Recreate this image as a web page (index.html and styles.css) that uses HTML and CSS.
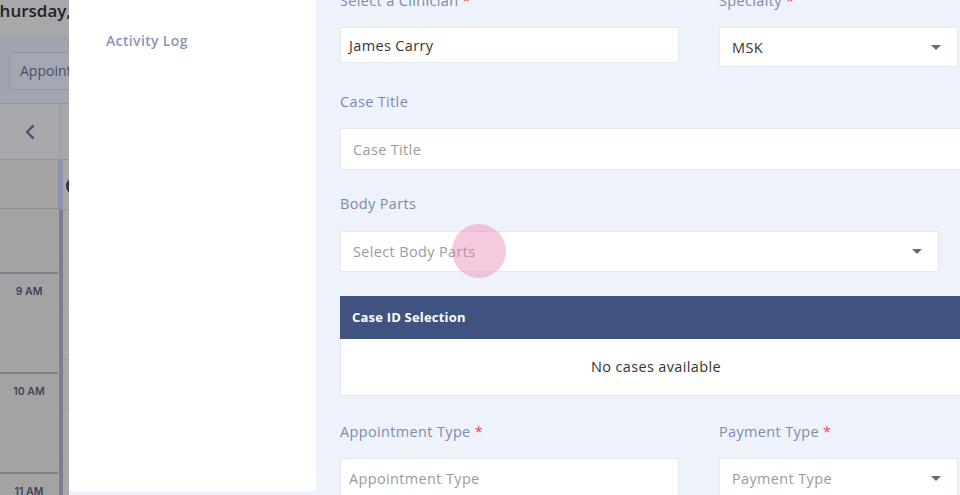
FILE: index.html
```html
<!DOCTYPE html>
<html>
<head>
<meta charset="utf-8">
<link rel="stylesheet" href="styles.css">
</head>
<body>
<div class="page">
  <div class="backdrop">
    <div class="bd-title">Thursday, March</div>
    <div class="bd-toolbar"><div class="bd-btn">Appointments</div></div>
    <div class="bd-nav">
      <div class="bd-prev">
        <svg width="12" height="16" viewBox="0 0 12 16"><path d="M9 2 L3 8 L9 14" fill="none" stroke="#4b5270" stroke-width="2.4" stroke-linecap="round" stroke-linejoin="round"/></svg>
      </div>
      <div class="bd-navrest"></div>
    </div>
    <div class="bd-cal">
      <div class="bd-times">
        <div class="bd-allday"></div>
        <div class="bd-slot bd-slot-short"></div>
        <div class="bd-slot"><span>9 AM</span></div>
        <div class="bd-slot"><span>10 AM</span></div>
        <div class="bd-slot"><span>11 AM</span></div>
      </div>
      <div class="bd-divider">
        <div class="bd-divider-top"></div>
        <div class="bd-divider-rest"></div>
      </div>
      <div class="bd-col">
        <div class="bd-col-head"><div class="bd-avatar"></div></div>
        <div class="bd-half"></div><div class="bd-half"></div><div class="bd-half"></div><div class="bd-half"></div><div class="bd-half"></div><div class="bd-half"></div><div class="bd-half"></div>
      </div>
    </div>
  </div>
  <div class="drawer">
    <aside class="side">
      <div class="side-item">Activity Log</div>
    </aside>
    <main class="form">
      <div class="row row-first">
        <div class="field field-half">
          <div class="label">Select a Clinician <span class="req">*</span></div>
          <div class="input input-short"><span class="value">James Carry</span></div>
        </div>
        <div class="field field-side">
          <div class="label">Specialty <span class="req">*</span></div>
          <div class="input select select-first"><span class="value">MSK</span><span class="caret"></span></div>
        </div>
      </div>
      <div class="field">
        <div class="label">Case Title</div>
        <div class="input input-wide input-pad"><span class="ph">Case Title</span></div>
      </div>
      <div class="field">
        <div class="label">Body Parts</div>
        <div class="input select select-body input-pad"><span class="ph">Select Body Parts</span><span class="caret"></span>
          <div class="click-dot"></div>
        </div>
      </div>
      <div class="case-table">
        <div class="case-head">Case ID Selection</div>
        <div class="case-body">No cases available</div>
      </div>
      <div class="row row-last">
        <div class="field field-half">
          <div class="label">Appointment Type <span class="req">*</span></div>
          <div class="input"><span class="ph">Appointment Type</span></div>
        </div>
        <div class="field field-side">
          <div class="label">Payment Type <span class="req">*</span></div>
          <div class="input select"><span class="ph">Payment Type</span><span class="caret"></span></div>
        </div>
      </div>
    </main>
  </div>
</div>
</body>
</html>
```

FILE: styles.css
```css
* { box-sizing: border-box; }
html, body { margin: 0; padding: 0; }
body {
  font-family: "Open Sans", "Noto Sans", sans-serif;
  background: #eef3fb;
}
.page {
  display: flex;
  width: 960px;
  height: 495px;
  overflow: hidden;
}

/* ---------- dimmed calendar backdrop ---------- */
.backdrop {
  width: 69px;
  flex: 0 0 69px;
  overflow: hidden;
  background: #a4a4a5;
  display: flex;
  flex-direction: column;
}
.bd-title {
  height: 38px;
  flex: 0 0 38px;
  background: #a8a8aa;
  color: #222224;
  font-size: 17px;
  font-weight: 600;
  line-height: 20px;
  padding-top: 1px;
  white-space: nowrap;
  text-indent: -10px;
  border-bottom: 1px solid #9d9fa6;
}
.bd-toolbar {
  height: 66px;
  flex: 0 0 66px;
  background: #a1a5af;
  padding: 14px 0 0 9px;
  border-bottom: 1px solid #92959d;
}
.bd-btn {
  width: 120px;
  height: 38px;
  border: 1px solid #9195a0;
  border-radius: 4px;
  background: #a4a8b2;
  color: #46506a;
  font-size: 14px;
  line-height: 36px;
  padding-left: 10px;
  white-space: nowrap;
}
.bd-nav {
  height: 56px;
  flex: 0 0 56px;
  display: flex;
  background: #a7a8ab;
  border-bottom: 1px solid #939498;
}
.bd-prev {
  width: 61px;
  display: flex;
  align-items: center;
  justify-content: center;
  border-right: 1px solid #97999e;
}
.bd-navrest { flex: 1; }
.bd-cal {
  flex: 1;
  display: flex;
  background: #a3a3a3;
}
.bd-times { width: 58px; flex: 0 0 58px; }
.bd-allday { height: 49px; border-bottom: 1px solid #8d8e92; }
.bd-slot {
  height: 100px;
  border-bottom: 2px solid #7c8090;
  text-align: center;
  padding-top: 11px;
  font-family: "Inter", "Open Sans", sans-serif;
  font-size: 10.5px;
  font-weight: 600;
  color: #3e4457;
}
.bd-slot-short { height: 65px; }
.bd-divider { width: 5px; flex: 0 0 5px; display: flex; flex-direction: column; }
.bd-divider-top { height: 50px; background: #8d91ad; }
.bd-divider-rest { flex: 1; background: #7a7f96; margin: 0 0 0 1px; }
.bd-col { flex: 1; background: #a8a8a8; }
.bd-col-head { height: 50px; border-bottom: 1px solid #9a9a9a; padding-top: 18px; }
.bd-avatar {
  width: 16px; height: 16px; border-radius: 50%;
  background: #352d3c; margin-left: 3px;
}
.bd-half { height: 50px; border-bottom: 1px solid #9c9c9c; }

/* ---------- drawer ---------- */
.drawer {
  flex: 1;
  display: flex;
  align-items: flex-start;
  background: #eef3fb;
  min-width: 0;
}
.side {
  width: 247px;
  flex: 0 0 247px;
  height: 491px;
  background: #ffffff;
  padding: 31px 0 0 37px;
}
.side-item {
  font-size: 14px;
  font-weight: 600;
  letter-spacing: 0.35px;
  line-height: 20px;
  color: #8b93b9;
}
.form {
  flex: 1;
  min-width: 0;
  padding-left: 24px;
  display: flex;
  flex-direction: column;
  gap: 24px;
  overflow: hidden;
  height: 495px;
  font-size: 14.5px;
  letter-spacing: 0.35px;
}
.row { display: flex; gap: 40px; align-items: flex-start; }
.row-first { margin-top: -9px; margin-bottom: 1px; }
.row-last { margin-top: 2px; }
.field { display: flex; flex-direction: column; flex: 0 0 auto; }
.field-half { width: 339px; }
.field-side { width: 239px; }
.label {
  font-size: 14.5px;
  font-weight: 500;
  line-height: 20px;
  color: #7f89ab;
  margin-bottom: 16px;
  white-space: nowrap;
}
.req { color: #e5484d; }
.input {
  position: relative;
  height: 41px;
  background: #ffffff;
  border: 1px solid #e4e9f1;
  display: flex;
  align-items: center;
  padding: 0 8px;
  font-size: 14.5px;
  white-space: nowrap;
}
.input-short { height: 36px; }
.select-first { height: 40px; }
.input-wide { width: 640px; height: 42px; }
.input-pad { padding-left: 12px; }
.select { padding-left: 12px; justify-content: space-between; padding-right: 16px; }
.select-body { width: 599px; margin-top: 1px; }
.value { color: #353535; }
.ph { color: #9b9b9b; }
.caret {
  width: 0; height: 0;
  border-left: 5px solid transparent;
  border-right: 5px solid transparent;
  border-top: 5px solid #6b6b6b;
}
.click-dot {
  position: absolute;
  left: 111px;
  top: -8px;
  width: 54px;
  height: 54px;
  border-radius: 50%;
  background: rgba(232, 128, 178, 0.42);
}
.case-table { width: 640px; }
.case-head {
  height: 43px;
  background: #3f5280;
  color: #ffffff;
  font-size: 13px;
  font-weight: 700;
  letter-spacing: 0.2px;
  line-height: 43px;
  padding-left: 12px;
}
.case-body {
  height: 57px;
  background: #ffffff;
  border: 1px solid #e3e7ef;
  border-top: none;
  text-align: center;
  line-height: 56px;
  font-size: 14.5px;
  color: #353535;
  padding-right: 8px;
}
```
